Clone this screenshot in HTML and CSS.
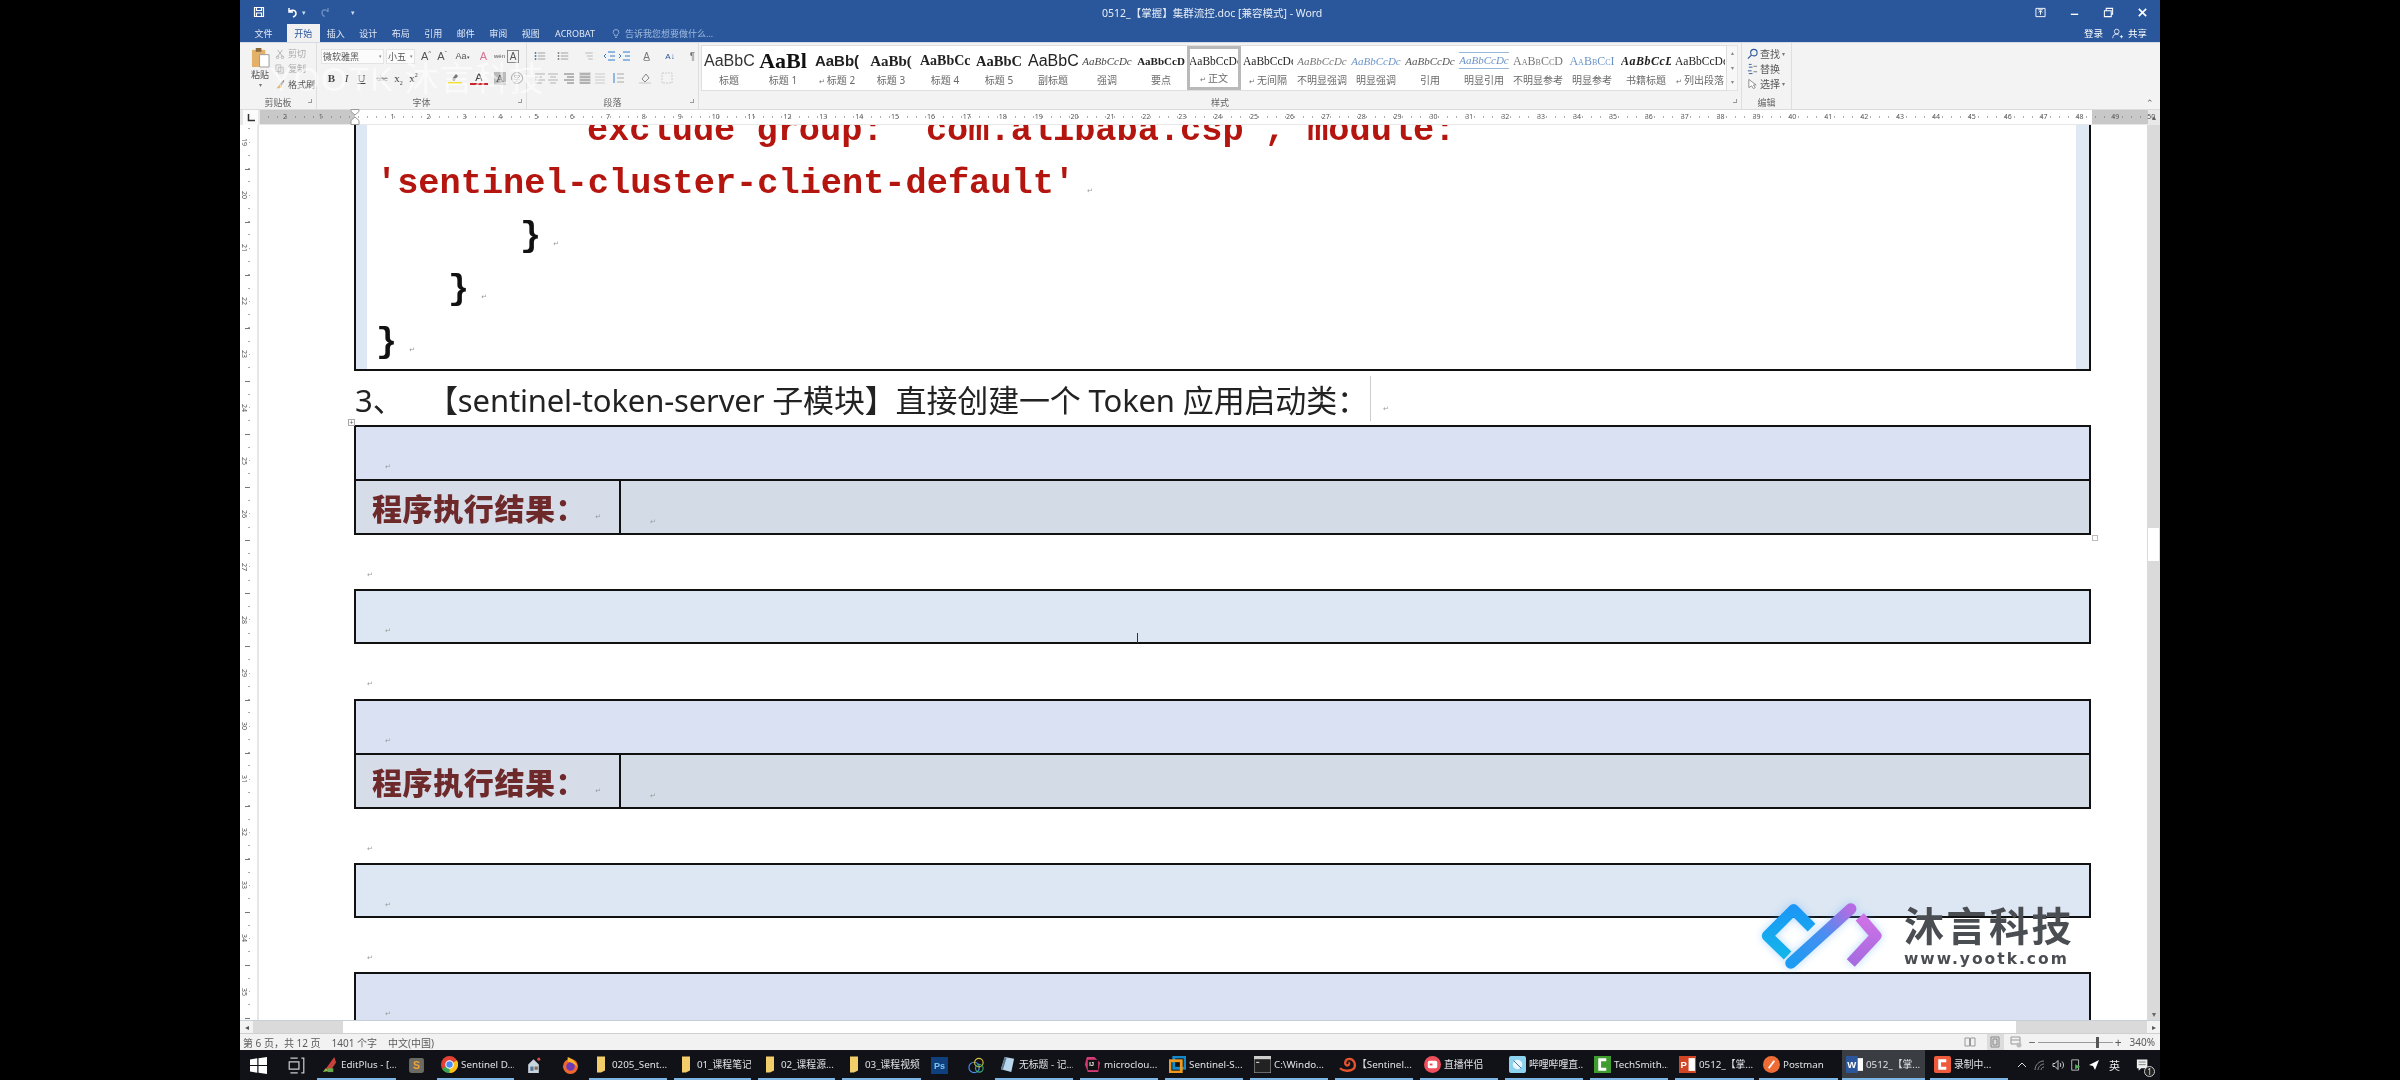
FILE: index.html
```html
<!DOCTYPE html>
<html lang="zh-CN">
<head>
<meta charset="utf-8">
<title>0512_【掌握】集群流控.doc [兼容模式] - Word</title>
<link rel="stylesheet" href="styles.css">
</head>
<body>
<div class="win">
  <header class="titlebar">
    <div class="qat">
      <svg class="qi save" viewBox="0 0 12 12"><path d="M1.500 1.500h9v9h-9zM3.500 1.500v3h5v-3M3.500 10.500v-3.500h5v3.500" fill="none" stroke="#fff" stroke-width="1.200"/></svg>
      <svg class="qi undo" viewBox="0 0 12 12"><path d="M3 2v4h4M3 6c2-3 7-2 7 1.500 0 2-1.500 3-3 3.500" fill="none" stroke="#fff" stroke-width="1.500"/></svg>
      <span class="caret">▾</span>
      <svg class="qi redo" viewBox="0 0 12 12"><path d="M9 2v4M9 6c-1-3-6-3-6 1 0 2 1.500 3 3 3.500" fill="none" stroke="#6d8fc2" stroke-width="1.300"/></svg>
      <span class="caret qend">▾</span>
    </div>
    <div class="doc-title">0512_【掌握】集群流控.doc [兼容模式] - Word</div>
    <div class="winctl">
      <span class="ctl"><svg viewBox="0 0 12 12"><path d="M1 1.500h10v9H1z" fill="none" stroke="#fff"/><path d="M6 8.500V4M4 6l2-2 2 2M3.500 3h5" fill="none" stroke="#fff"/></svg></span>
      <span class="ctl"><svg viewBox="0 0 12 12"><path d="M2 8h8" stroke="#fff" stroke-width="1.500"/></svg></span>
      <span class="ctl"><svg viewBox="0 0 12 12"><path d="M1.500 4h7.500v6.500H1.500zM3.500 4V1.500h7V8H9" fill="none" stroke="#fff" stroke-width="1.100"/></svg></span>
      <span class="ctl"><svg viewBox="0 0 12 12"><path d="M2 2l8 8M10 2l-8 8" stroke="#fff" stroke-width="1.800"/></svg></span>
    </div>
  </header>

  <nav class="tabs">
    <span class="tab file">文件</span>
    <span class="tab active">开始</span>
    <span class="tab">插入</span>
    <span class="tab">设计</span>
    <span class="tab">布局</span>
    <span class="tab">引用</span>
    <span class="tab">邮件</span>
    <span class="tab">审阅</span>
    <span class="tab">视图</span>
    <span class="tab acrobat">ACROBAT</span>
    <span class="tell">
      <svg viewBox="0 0 10 12"><path d="M3.500 9V7.500C2 6.500 1.500 5.500 1.500 4.500a3.500 3.500 0 0 1 7 0c0 1-.5 2-2 3V9zM4 11h2" fill="none" stroke="#a9c1e4"/></svg>
      告诉我您想要做什么...
    </span>
    <span class="account">
      <span>登录</span>
      <svg viewBox="0 0 14 14"><circle cx="6" cy="4.500" r="3" fill="none" stroke="#fff"/><path d="M1 13c0-4 2-5 5-5 1 0 2 .3 2.500 1M10 11h4M12 9v4" fill="none" stroke="#fff"/></svg>
      <span>共享</span>
    </span>
  </nav>

  <section class="ribbon">
    <div class="group clip">
      <div class="gbody clipbody">
        <div class="paste">
          <svg viewBox="0 0 20 22"><rect x="1" y="3" width="14" height="18" fill="#e3b268"/><rect x="5" y="1" width="6" height="4" fill="#8a6a3c"/><path d="M9 8h10v13H9z" fill="#fff" stroke="#999"/></svg>
          <span>粘贴</span>
          <span class="mini">▾</span>
        </div>
        <div class="cliplist">
          <span class="cl faint"><svg viewBox="0 0 12 12"><path d="M3 1l6 8M9 1l-6 8" stroke="#aaa"/><circle cx="3" cy="10" r="1.500" fill="none" stroke="#aaa"/><circle cx="9" cy="10" r="1.500" fill="none" stroke="#aaa"/></svg>剪切</span>
          <span class="cl faint"><svg viewBox="0 0 12 12"><path d="M1 1h6v8H1zM4 4h6v7H4z" fill="#eee" stroke="#bbb"/></svg>复制</span>
          <span class="cl"><svg viewBox="0 0 12 12"><path d="M2 11l4-5 3 3-3 2z" fill="#e5b25c"/><path d="M6 6l4-5 1 1-3 6z" fill="#666"/></svg>格式刷</span>
        </div>
      </div>
      <div class="glabel">剪贴板<i class="launch"></i></div>
    </div>

    <div class="group font">
      <div class="gbody rows">
        <div class="row f1">
          <span class="combo cname">微软雅黑<em>▾</em></span>
          <span class="combo csize">小五<em>▾</em></span>
          <b class="b grow">A<sup>^</sup></b><b class="b">A<sup>ˇ</sup></b><span class="b aa">Aa<em>▾</em></span><span class="b clr">A</span><span class="b wen">wén</span><span class="b abox">A</span>
        </div>
        <div class="row f2">
          <b class="t">B</b><i class="t ital">I</i><u class="t">U</u><s class="t abc">abc</s><span class="t">x<sub>2</sub></span><span class="t">x<sup>2</sup></span>
          <span class="hl"><svg viewBox="0 0 14 12"><path d="M4 7l4-5 2 2-4 5z" fill="#777"/><rect y="10" width="14" height="2" fill="#f4df2e"/></svg></span>
          <span class="t ca">A</span><span class="t sh">A</span><span class="t circ">字</span>
        </div>
      </div>
      <div class="glabel">字体<i class="launch"></i></div>
    </div>

    <div class="group para">
      <div class="gbody rows">
        <div class="row p1">
          <svg class="pi w23" viewBox="0 0 16 12"><path d="M5 2h10M5 6h10M5 10h10" stroke="#888"/><path d="M1 2h2M1 6h2M1 10h2" stroke="#2b579a" stroke-width="2"/></svg>
          <svg class="pi w26" viewBox="0 0 16 12"><path d="M5 2h10M5 6h10M5 10h10" stroke="#888"/><path d="M1 2h2M1 6h2M1 10h2" stroke="#666" stroke-width="2"/></svg>
          <svg class="pi w20" viewBox="0 0 16 12"><path d="M3 2h10M5 6h8M7 10h6" stroke="#aaa"/></svg>
          <svg class="pi w15 tint" viewBox="0 0 12 12"><path d="M5 2h7M5 10h7M7 6h5" stroke="#2b7cd3"/><path d="M3 4L1 6l2 2" stroke="#2b7cd3" fill="none"/></svg>
          <svg class="pi w23 tint" viewBox="0 0 12 12"><path d="M5 2h7M5 10h7M7 6h5" stroke="#2b7cd3"/><path d="M1 4l2 2-2 2" stroke="#2b7cd3" fill="none"/></svg>
          <span class="pt w24">A̲</span>
          <span class="pt w23 sort">A↓</span>
          <span class="pt">¶</span>
        </div>
        <div class="row p2">
          <svg class="pi w13 lite" viewBox="0 0 12 12"><path d="M1 2h10M1 5h7M1 8h10M1 11h7" stroke="#999"/></svg>
          <svg class="pi w16 lite" viewBox="0 0 12 12"><path d="M1 2h10M3 5h6M1 8h10M3 11h6" stroke="#999"/></svg>
          <svg class="pi w16" viewBox="0 0 12 12"><path d="M1 2h10M4 5h7M1 8h10M4 11h7" stroke="#777"/></svg>
          <svg class="pi w15 shade" viewBox="0 0 12 12"><path d="M1 2h10M1 5h10M1 8h10M1 11h10" stroke="#888"/></svg>
          <svg class="pi w18 lite" viewBox="0 0 12 12"><path d="M1 2h10M1 5h10M1 8h10M1 11h10" stroke="#bbb"/></svg>
          <svg class="pi w27" viewBox="0 0 12 12"><path d="M5 2h7M5 6h7M5 10h7" stroke="#aaa"/><path d="M2 1v10" stroke="#2b7cd3"/></svg>
          <svg class="pi w22" viewBox="0 0 12 12"><path d="M3 7l4-5 3 4-4 4z" fill="none" stroke="#888"/><rect y="10" width="12" height="2" fill="#ddd"/></svg>
          <svg class="pi" viewBox="0 0 12 12"><path d="M1 1h10v10H1z" fill="none" stroke="#ccc" stroke-dasharray="2 1"/></svg>
        </div>
      </div>
      <div class="glabel">段落<i class="launch"></i></div>
    </div>

    <div class="group styles">
      <div class="gbody gallerywrap">
        <div class="gallery">
          <div class="st"><span class="sm s-light">AaBbC</span><span class="lb">标题</span></div>
          <div class="st"><span class="sm s-h1">AaBl</span><span class="lb">标题 1</span></div>
          <div class="st"><span class="sm s-h2">AaBb(</span><span class="lb"><em>↵</em>标题 2</span></div>
          <div class="st"><span class="sm s-h3">AaBb(</span><span class="lb">标题 3</span></div>
          <div class="st"><span class="sm s-h4">AaBbCc</span><span class="lb">标题 4</span></div>
          <div class="st"><span class="sm s-h5">AaBbC</span><span class="lb">标题 5</span></div>
          <div class="st"><span class="sm s-sub">AaBbC</span><span class="lb">副标题</span></div>
          <div class="st"><span class="sm s-em">AaBbCcDc</span><span class="lb">强调</span></div>
          <div class="st"><span class="sm s-st">AaBbCcD</span><span class="lb">要点</span></div>
          <div class="st on"><span class="sm s-n">AaBbCcDc</span><span class="lb"><em>↵</em>正文</span></div>
          <div class="st"><span class="sm s-n">AaBbCcDc</span><span class="lb"><em>↵</em>无间隔</span></div>
          <div class="st"><span class="sm s-em g">AaBbCcDc</span><span class="lb">不明显强调</span></div>
          <div class="st"><span class="sm s-em bl">AaBbCcDc</span><span class="lb">明显强调</span></div>
          <div class="st"><span class="sm s-em dk">AaBbCcDc</span><span class="lb">引用</span></div>
          <div class="st"><span class="sm s-em bl ruled">AaBbCcDc</span><span class="lb">明显引用</span></div>
          <div class="st"><span class="sm s-caps g">AaBbCcD</span><span class="lb">不明显参考</span></div>
          <div class="st"><span class="sm s-caps bl">AaBbCcI</span><span class="lb">明显参考</span></div>
          <div class="st"><span class="sm s-book">AaBbCcD</span><span class="lb">书籍标题</span></div>
          <div class="st"><span class="sm s-n">AaBbCcDc</span><span class="lb"><em>↵</em>列出段落</span></div>
        </div>
        <div class="gscroll"><span>▴</span><span>▾</span><span>▾</span></div>
      </div>
      <div class="glabel">样式<i class="launch"></i></div>
    </div>

    <div class="group edit">
      <div class="gbody editlist">
        <span class="ed"><svg viewBox="0 0 12 12"><circle cx="7.500" cy="4.500" r="3.500" fill="none" stroke="#2b579a" stroke-width="1.200"/><path d="M5 7l-4 4" stroke="#2b579a" stroke-width="1.300"/></svg>查找<em>▾</em></span>
        <span class="ed"><svg viewBox="0 0 12 12"><path d="M2 1h3M2 4h4M1 8h4M2 11h4" stroke="#2b579a"/><path d="M7 3h4M7 9h4" stroke="#777"/></svg>替换</span>
        <span class="ed"><svg viewBox="0 0 12 12"><path d="M2 1v9l3-2 2 3 2-1-2-3h3z" fill="#fff" stroke="#888"/></svg>选择<em>▾</em></span>
      </div>
      <div class="glabel">编辑</div>
    </div>

    <div class="collapse">⌃</div>
    <div class="ghost">YOOTK 沐言科技</div>
  </section>

  <div class="hruler">
    <span class="tabstop"><svg viewBox="0 0 8 8"><path d="M1.500 0v6.500H8" fill="none" stroke="#333" stroke-width="1.500"/></svg></span>
    <div class="htrack">
      <svg class="indent" viewBox="0 0 10 16"><path d="M1 .5h8v2L5 6 1 2.500zM5 8l4 3.500v4H1v-4z" fill="#fff" stroke="#999"/></svg>
      <span>2</span><span>1</span><span></span><span>1</span><span>2</span><span>3</span><span>4</span><span>5</span><span>6</span><span>7</span><span>8</span><span>9</span><span>10</span><span>11</span><span>12</span><span>13</span><span>14</span><span>15</span><span>16</span><span>17</span><span>18</span><span>19</span><span>20</span><span>21</span><span>22</span><span>23</span><span>24</span><span>25</span><span>26</span><span>27</span><span>28</span><span>29</span><span>30</span><span>31</span><span>32</span><span>33</span><span>34</span><span>35</span><span>36</span><span>37</span><span>38</span><span>39</span><span>40</span><span>41</span><span>42</span><span>43</span><span>44</span><span>45</span><span>46</span><span>47</span><span>48</span><span>49</span><span>50</span>
    </div>
    <div class="upbtn">▴</div>
  </div>

  <main class="docarea">
    <div class="vruler">
      <div class="vtrack">
        <span>19</span><span>20</span><span>21</span><span>22</span><span>23</span><span>24</span><span>25</span><span>26</span><span>27</span><span>28</span><span>29</span><span>30</span><span>31</span><span>32</span><span>33</span><span>34</span><span>35</span>
      </div>
    </div>
    <div class="page">
      <div class="code">
        <p class="cl1 red">exclude group: 'com.alibaba.csp', module:</p>
        <p class="cline red">'sentinel-cluster-client-default'<i class="pm">↵</i></p>
        <p class="cline ind2">}<i class="pm">↵</i></p>
        <p class="cline ind1">}<i class="pm">↵</i></p>
        <p class="cline">}<i class="pm">↵</i></p>
      </div>
      <h2 class="head"><span class="num">3、</span><span class="htext">【sentinel-token-server 子模块】直接创建一个 Token 应用启动类：</span><span class="caretbox"><i class="pm">↵</i></span></h2>
      <div class="tbl lav first">
        <span class="move">+</span>
        <div class="rw"><i class="pm">↵</i></div>
        <div class="rw res">
          <div class="lab">程序执行结果：<i class="pm">↵</i></div>
          <div class="val"><i class="pm">↵</i></div>
        </div>
        <span class="resize"></span>
      </div>
      <div class="gap"><i class="pm">↵</i></div>
      <div class="tbl sky"><div class="rw rw-solo"><i class="pm">↵</i></div></div>
      <div class="gap gap2"><i class="pm">↵</i></div>
      <div class="tbl lav">
        <div class="rw"><i class="pm">↵</i></div>
        <div class="rw res">
          <div class="lab">程序执行结果：<i class="pm">↵</i></div>
          <div class="val"><i class="pm">↵</i></div>
        </div>
      </div>
      <div class="gap"><i class="pm">↵</i></div>
      <div class="tbl sky"><div class="rw rw-solo"><i class="pm">↵</i></div></div>
      <div class="gap"><i class="pm">↵</i></div>
      <div class="tbl lav"><div class="rw rw-solo"><i class="pm">↵</i></div></div>
      <span class="ibeam"></span>
    </div>
    <div class="vscroll"><span class="vthumb"></span><span class="va up">▴</span><span class="va down">▾</span></div>
  </main>

  <div class="hscroll">
    <span class="ha">◂</span><span class="hgray"></span><span class="hwhite"></span><span class="hgray2"></span><span class="ha">▸</span>
  </div>

  <footer class="status">
    <span>第 6 页，共 12 页</span><span>1401 个字</span><span>中文(中国)</span>
    <div class="viewctl">
      <svg class="vi" viewBox="0 0 12 12"><path d="M1 2h4.500v8H1zM6.500 2H11v8H6.500z" fill="none" stroke="#999"/></svg>
      <span class="vbox"><svg class="vi" viewBox="0 0 12 12"><path d="M2 1h8v10H2zM4 3h4v6H4z" fill="none" stroke="#888"/></svg></span>
      <svg class="vi" viewBox="0 0 12 12"><path d="M1 1h9v7H1zM1 4h9" fill="none" stroke="#999"/><circle cx="9" cy="9" r="2.500" fill="#bbb"/></svg>
      <span class="zm minus">−</span>
      <span class="slider"><i class="knob"></i></span>
      <span class="zm plus">+</span>
      <span class="pct">340%</span>
    </div>
  </footer>

  <div class="taskbar">
    <span class="tcell c36"><svg class="ti" viewBox="0 0 14 14"><path d="M0 2l6-1v5.500H0zM7 1l7-1v6.500H7zM0 7.500h6V13l-6-1zM7 7.500h7V14l-7-1z" fill="#fff"/></svg></span>
    <span class="tcell c41"><svg class="ti" viewBox="0 0 14 14"><path d="M1 4h8v6H1zM11 1h2v12h-2M2 1h6M2 13h6" fill="none" stroke="#ccc"/></svg></span>
    <span class="app w79"><svg class="ti" viewBox="0 0 16 18"><path d="M3 15L13 1l2 6-7 10z" fill="#c8423b"/><path d="M1 17l3-4 3 3z" fill="#8fc04d"/><rect x="6" y="13" width="6" height="4" fill="#6aa84f"/></svg>EditPlus - [...</span>
    <span class="tcell c41"><svg class="ti" viewBox="0 0 16 16"><rect x="1" y="1" width="14" height="14" rx="2" fill="#6b6b63"/><text x="8" y="11" class="sblm">S</text></svg></span>
    <span class="app w77n"><svg class="ti" viewBox="0 0 16 16"><circle cx="8" cy="8" r="8" fill="#e34133"/><path d="M8 8L1 12a8 8 0 0 0 7 4z" fill="#35a853"/><path d="M8 8v8a8 8 0 0 0 7-12z" fill="#fbc116"/><circle cx="8" cy="8" r="3.500" fill="#4a8bf5" stroke="#fff"/></svg>Sentinel D...</span>
    <span class="tcell c38"><svg class="ti" viewBox="0 0 16 16"><path d="M3 7l5-5 5 5v8H3z" fill="#c7d4dc"/><rect x="5" y="9" width="3" height="4" fill="#59729a"/><rect x="9" y="9" width="3" height="3" fill="#7d6a57"/><circle cx="13" cy="2" r="1.500" fill="#d24a3f"/></svg></span>
    <span class="tcell c37"><svg class="ti" viewBox="0 0 16 18"><circle cx="8" cy="10" r="8" fill="#f0662c"/><circle cx="8" cy="10" r="4.500" fill="#6d3bb8"/><path d="M5 0c5 2 9 5 10 10-3-3-7-5-10-5z" fill="#fbb72c"/></svg></span>
    <span class="app w78"><svg class="ti fold" viewBox="0 0 8 16"><path d="M0 0h8v14l-4 2H0z" fill="#f3cd6a"/></svg>0205_Sent...</span>
    <span class="app w77"><svg class="ti fold" viewBox="0 0 8 16"><path d="M0 0h8v14l-4 2H0z" fill="#f3cd6a"/></svg>01_课程笔记</span>
    <span class="app w77"><svg class="ti fold" viewBox="0 0 8 16"><path d="M0 0h8v14l-4 2H0z" fill="#f3cd6a"/></svg>02_课程源...</span>
    <span class="app w79x"><svg class="ti fold" viewBox="0 0 8 16"><path d="M0 0h8v14l-4 2H0z" fill="#f3cd6a"/></svg>03_课程视频</span>
    <span class="tcell c37"><svg class="ti" viewBox="0 0 16 16"><rect width="16" height="16" fill="#0f3f7c"/><text x="8" y="11.500" class="psh">Ps</text></svg></span>
    <span class="tcell c37"><svg class="ti" viewBox="0 0 18 18"><circle cx="6.500" cy="11" r="5.500" fill="none" stroke="#4a8df0" stroke-width="1.200"/><circle cx="11.500" cy="6" r="4.500" fill="none" stroke="#d7c33b" stroke-width="1.200"/><circle cx="12" cy="12" r="4" fill="none" stroke="#3ab06f" stroke-width="1.200"/></svg></span>
    <span class="app w78"><svg class="ti" viewBox="0 0 16 18"><path d="M5 1l10 2-3 14-11-3z" fill="#b8d6ee"/><path d="M1 14l4-13 2 1-4 13z" fill="#5f7a8f"/></svg>无标题 - 记...</span>
    <span class="app w78"><svg class="ti" viewBox="0 0 18 18"><path d="M3 1h8l6 6-2 10H4L1 9z" fill="#d63a78"/><rect x="4" y="4" width="11" height="11" fill="#111"/><text x="5.500" y="11" class="idea">IJ</text></svg>microclou...</span>
    <span class="app w78"><svg class="ti" viewBox="0 0 18 18"><rect x="5" y="1" width="12" height="12" fill="none" stroke="#1588c9" stroke-width="3"/><rect x="1" y="5" width="12" height="12" fill="none" stroke="#ef9a1f" stroke-width="3"/></svg>Sentinel-S...</span>
    <span class="app w78"><svg class="ti" viewBox="0 0 16 16"><rect width="16" height="16" fill="#222" stroke="#aaa"/><rect width="16" height="3" fill="#ccc"/><path d="M2 6h3" stroke="#ddd"/></svg>C:\Windo...</span>
    <span class="app w78 pad"><svg class="ti" viewBox="0 0 18 16"><path d="M1 12c3 3 11 4 15 0 2-4 0-10-5-10-5 0-6 7-2 7 2 0 2-3 1-3" fill="none" stroke="#e4532c" stroke-width="2.500"/></svg>【Sentinel...</span>
    <span class="app w78"><svg class="ti" viewBox="0 0 18 18"><circle cx="9" cy="9" r="9" fill="#ef4f5d"/><rect x="4" y="5" width="10" height="8" rx="2" fill="#fff"/><rect x="6" y="8" width="3" height="2" fill="#ef4f5d"/></svg>直播伴侣</span>
    <span class="app w78"><svg class="ti" viewBox="0 0 18 18"><rect width="18" height="18" rx="2" fill="#8dd3ef"/><circle cx="9" cy="9" r="5" fill="#e9f6fb"/><path d="M5 5l8 8" stroke="#3f6fa5"/></svg>哔哩哔哩直...</span>
    <span class="app w78"><svg class="ti" viewBox="0 0 18 18"><rect width="18" height="18" fill="#3f9c2f"/><path d="M13 4H6v10h7" fill="none" stroke="#fff" stroke-width="3"/></svg>TechSmith...</span>
    <span class="app w79p"><svg class="ti" viewBox="0 0 16 16"><rect width="16" height="16" fill="#d14424"/><rect x="9" y="2" width="6" height="12" fill="#fff"/><text x="4.500" y="11.500" class="pp">P</text></svg>0512_【掌...</span>
    <span class="app w79b"><svg class="ti" viewBox="0 0 18 18"><circle cx="9" cy="9" r="9" fill="#ef6c35"/><path d="M6 13l6-8" stroke="#fff" stroke-width="2"/></svg>Postman</span>
    <span class="app active w83"><svg class="ti" viewBox="0 0 16 16"><rect width="11" height="16" fill="#2b579a"/><rect x="11" y="2" width="5" height="12" fill="#fff"/><text x="5.500" y="11.500" class="pp">W</text></svg>0512_【掌...</span>
    <span class="app w78"><svg class="ti" viewBox="0 0 18 18"><rect width="18" height="18" rx="2" fill="#ee5b3c"/><path d="M13 5H6v8h7" fill="none" stroke="#fff" stroke-width="3"/></svg>录制中...</span>
    <div class="tray">
      <svg class="ty" viewBox="0 0 12 12"><path d="M2 8l4-4 4 4" fill="none" stroke="#ddd"/></svg>
      <svg class="ty" viewBox="0 0 12 12"><path d="M1 11c0-5 4-9 9-9M4 11c0-3 3-6 6-6M7 11c0-1 1-3 3-3" fill="none" stroke="#888"/></svg>
      <svg class="ty" viewBox="0 0 12 12"><path d="M1 4.500h2l3-3v9l-3-3H1z" fill="none" stroke="#ccc"/><path d="M8 4c1 1 1 3 0 4M10 2.500c2 2 2 5 0 7" fill="none" stroke="#ccc"/></svg>
      <svg class="ty" viewBox="0 0 12 14"><path d="M1 1h8v12H1z" fill="none" stroke="#ccc"/><path d="M5 6l6 3-6 3z" fill="#4caf50"/></svg>
      <svg class="ty" viewBox="0 0 12 12"><path d="M1 6l10-5-4 10-2-4z" fill="#fff"/></svg>
      <span class="ime">英</span>
      <span class="notif"><svg viewBox="0 0 16 14"><path d="M1 0h12v10H6l-3 3v-3H1z" fill="#eee"/><path d="M3 3h8M3 6h8" stroke="#777"/></svg><b>1</b></span>
    </div>
  </div>

  <div class="logo">
    <svg class="logomark" viewBox="115 58 385 215">
      <defs>
        <linearGradient id="lg1" x1="0" y1="0" x2="0" y2="1"><stop offset="0" stop-color="#1b98f5"/><stop offset="1" stop-color="#12b5ea"/></linearGradient>
        <linearGradient id="lg2" x1="0" y1="1" x2="1" y2="0"><stop offset="0" stop-color="#1b9bf2"/><stop offset=".55" stop-color="#4a8ef0"/><stop offset="1" stop-color="#b56ce2"/></linearGradient>
        <linearGradient id="lg3" x1="0" y1="0" x2="0" y2="1"><stop offset="0" stop-color="#cf72e6"/><stop offset="1" stop-color="#a66be0"/></linearGradient>
      </defs>
      <path d="M276 140L222 86 143 165 204 224" fill="none" stroke="url(#lg1)" stroke-width="33" stroke-linejoin="round"/>
      <path d="M214 247L394 84" fill="none" stroke="url(#lg2)" stroke-width="34" stroke-linecap="round"/>
      <path d="M421 108L470 165 394 247" fill="none" stroke="url(#lg3)" stroke-width="33" stroke-linejoin="round"/>
    </svg>
    <div class="logotext">
      <span class="lcn">沐言科技</span>
      <span class="len">www.yootk.com</span>
    </div>
  </div>
</div>
</body>
</html>
```
FILE: styles.css
```css
* { box-sizing: border-box; }
html, body { margin: 0; height: 100%; background: #000; overflow: hidden; }
body { display: flex; justify-content: center; font-family: "Noto Sans", "Noto Sans CJK SC", sans-serif; }
p, h2 { margin: 0; }
em { font-style: normal; }

.win { position: relative; width: 1920px; height: 1080px; display: flex; flex-direction: column; background: #f1f1f1; color: #444; overflow: hidden; filter: blur(.35px); }

/* title bar */
.titlebar { height: 24px; flex: none; background: #2a579c; display: grid; grid-template-columns: 862px 300px 1fr; align-items: center; color: #e6edf7; }
.qat { display: flex; align-items: center; padding-left: 13px; }
.qi { width: 12px; height: 12px; }
.undo { margin-left: 21px; }
.caret { font-size: 7px; color: #cfdcef; margin-left: 4px; }
.redo { margin-left: 13px; }
.qend { margin-left: 20px; }
.doc-title { font-size: 10.500px; white-space: nowrap; }
.winctl { display: flex; justify-content: flex-end; padding-right: 1px; }
.ctl { width: 34px; display: flex; justify-content: center; }
.ctl svg { width: 11px; height: 11px; }

/* tabs */
.tabs { height: 18px; flex: none; background: #2a579c; display: flex; align-items: stretch; font-size: 9px; color: #e2e9f5; }
.tab { width: 32.500px; display: flex; align-items: center; justify-content: center; }
.tab.file { width: 47px; }
.tab.active { background: #f1f1f1; color: #2a579c; }
.tab.acrobat { width: 56px; }
.tell { display: flex; align-items: center; gap: 5px; margin-left: 9px; color: #9fb9de; }
.tell svg { width: 8px; height: 11px; }
.account { margin-left: auto; margin-right: 13px; display: flex; align-items: center; color: #fff; font-size: 9.500px; }
.account svg { width: 11px; height: 11px; margin: 0 5px 0 9px; }

/* ribbon */
.ribbon { position: relative; height: 68px; flex: none; display: flex; background: #f3f3f3; border-bottom: 1px solid #dcdcdc; border-top: 1px solid #d4dbe6; font-size: 9px; }
.group { display: flex; flex-direction: column; border-right: 1px solid #dedede; }
.gbody { flex: 1; min-height: 0; }
.glabel { position: relative; height: 18px; padding-top: 5px; flex: none; display: flex; align-items: center; justify-content: center; color: #666; font-size: 9px; }
.launch { position: absolute; right: 4px; top: 8px; width: 4px; height: 4px; border-right: 1px solid #999; border-bottom: 1px solid #999; }
.clip { width: 77px; }
.font { width: 210px; }
.para { width: 172px; }
.styles { width: 1043px; }
.edit { width: 50px; }

.clipbody { display: flex; padding: 4px 0 0 8px; }
.paste { width: 24px; display: flex; flex-direction: column; align-items: center; color: #555; }
.paste svg { width: 19px; height: 21px; margin-bottom: 1px; }
.mini { font-size: 6px; line-height: 8px; color: #777; }
.paste span:nth-child(2) { line-height: 12px; }
.cliplist { display: flex; flex-direction: column; gap: 2px; margin-left: 3px; }
.cl { display: flex; align-items: center; gap: 3px; height: 14px; color: #555; white-space: nowrap; }
.cl.faint { color: #aaa; }
.cl svg { width: 10px; height: 10px; }

.rows { display: flex; flex-direction: column; padding: 5px 0 0 4px; gap: 6px; }
.row { display: flex; align-items: center; height: 16px; color: #555; }
.combo { height: 15px; display: flex; align-items: center; justify-content: space-between; background: #fbfbfb; border: 1px solid #e4e4e4; padding: 0 1px; font-size: 9px; }
.combo em { font-size: 5px; color: #888; }
.cname { width: 63px; margin-right: 2px; }
.csize { width: 29px; margin-right: 3px; }
.b { width: 16px; text-align: center; font-size: 11px; font-weight: 500; font-family: "Liberation Sans", sans-serif; }
.b sup { font-size: 6px; line-height: 0; }
.b.aa { width: 25px; font-size: 9px; }
.b.aa em { font-size: 5px; }
.b.clr { color: #d9718e; width: 17px; }
.b.wen { font-size: 6px; width: 15px; }
.b.abox { width: 12px; height: 13px; border: 1px solid #888; font-size: 10px; line-height: 11px; }
.f2 { padding-left: 3px; }
.t { width: 15px; text-align: center; font-family: "Liberation Serif", serif; font-size: 11px; color: #444; text-decoration-thickness: 1px; }
.t.ital { font-family: "Liberation Serif", serif; }
.t.abc { font-size: 8px; width: 18px; margin-left: 4px; color: #999; }
.t sub, .t sup { font-size: 6px; line-height: 0; }
.hl { width: 14px; margin-left: 27px; display: flex; }
.hl svg { width: 14px; height: 12px; }
.t.ca { margin-left: 8px; border-bottom: 2px solid #c9252c; line-height: 11px; font-family: "Liberation Sans", sans-serif; width: 18px; }
.t.sh { background: #bbb; margin-left: 6px; width: 12px; line-height: 13px; }
.t.circ { font-size: 7px; border: 1px solid #aaa; border-radius: 50%; width: 12px; height: 12px; line-height: 10px; margin-left: 5px; font-family: "Noto Sans CJK SC", sans-serif; color: #999; }
.pi { width: 12px; height: 12px; flex: none; }
.pt { font-size: 10px; color: #777; width: 12px; text-align: center; font-family: "Liberation Sans", sans-serif; }
.p1, .p2 { gap: 0; padding-left: 3px; }
.w13 { margin-right: 1px; }
.w15 { margin-right: 3px; }
.w16 { margin-right: 4px; }
.w18 { margin-right: 6px; }
.w20 { margin-right: 8px; }
.w22 { margin-right: 10px; }
.w23 { margin-right: 11px; }
.w24 { margin-right: 12px; }
.w26 { margin-right: 14px; }
.w27 { margin-right: 15px; }
.sort { color: #2b579a; font-size: 8px; }
.lite { opacity: .7; }
.shade { background: #ddd; }

.gallerywrap { display: flex; padding: 2px 0 0 2px; }
.gallery { width: 1026px; height: 46px; display: flex; background: #fff; border: 1px solid #dedede; }
.st { width: 54px; flex: none; display: flex; flex-direction: column; align-items: center; overflow: hidden; }
.st.on { border: 3px solid #b9b9b9; margin-left: -1px; }
.st.on .sm { margin-top: -3px; }
.sm { height: 27px; width: 50px; display: block; overflow: hidden; white-space: nowrap; text-align: center; line-height: 30px; font-family: "Liberation Serif", serif; font-size: 11.500px; color: #222; }
.lb { font-size: 10px; line-height: 14px; color: #6a6a6a; white-space: nowrap; }
.lb em { font-size: 7px; margin-right: 2px; }
.s-light { font-family: "Liberation Sans", sans-serif; font-size: 16px; font-weight: 300; color: #333; }
.s-h1 { font-size: 22px; font-weight: 700; color: #111; }
.s-h2 { font-family: "Liberation Sans", sans-serif; font-size: 15px; font-weight: 700; }
.s-h3 { font-size: 15px; font-weight: 700; }
.s-h4 { font-size: 14px; font-weight: 700; }
.s-h5 { font-size: 14.500px; font-weight: 700; }
.s-sub { font-family: "Liberation Sans", sans-serif; font-size: 16px; }
.s-em { font-style: italic; font-size: 11px; color: #444; }
.s-st { font-weight: 700; font-size: 11px; }
.s-n { font-size: 11.500px; }
.s-caps { font-variant: small-caps; font-size: 12px; }
.s-book { font-style: italic; font-weight: 700; font-size: 12px; letter-spacing: .5px; }
.g { color: #777; }
.bl { color: #6a93c8; }
.dk { color: #555; }
.ruled { line-height: 14px; height: 17px; margin-top: 6px; border-top: 1px solid #9ab8dc; border-bottom: 1px solid #9ab8dc; margin-bottom: 4px; }
.gscroll { width: 11px; height: 46px; display: flex; flex-direction: column; background: #f7f7f7; border: 1px solid #e4e4e4; border-left: 0; }
.gscroll span { flex: 1; font-size: 6px; line-height: 14px; text-align: center; color: #888; }

.editlist { display: flex; flex-direction: column; padding: 3px 0 0 5px; }
.ed { display: flex; align-items: center; gap: 2px; height: 16px; font-size: 10px; color: #555; white-space: nowrap; }
.ed svg { width: 11px; height: 12px; }
.ed em { font-size: 6px; color: #777; }
.collapse { margin-left: auto; margin-right: 6px; align-self: flex-end; font-size: 9px; line-height: 12px; color: #666; }
.ghost { position: absolute; left: 30px; top: 17px; font-size: 34px; line-height: 38px; white-space: nowrap; font-family: "Liberation Sans", "Noto Sans CJK SC", sans-serif; color: rgba(255, 255, 255, .55); letter-spacing: 1px; pointer-events: none; }

/* rulers */
.hruler { height: 15px; flex: none; display: flex; background: #e8e8e8; }
.tabstop { width: 15px; margin: 0 2px 0 3px; background: #fbfbfb; display: flex; align-items: center; justify-content: center; }
.tabstop svg { width: 8px; height: 8px; }
.htrack { position: relative; width: 1888px; display: flex; padding-left: 7px; height: 14px; background: repeating-linear-gradient(to right, transparent 0 8px, rgba(110,110,110,.55) 8px 9px) 0 6px / 100% 2px no-repeat, linear-gradient(to right, #c8c8c8 95px, #fff 95px, #fff 1832px, #c8c8c8 1832px); }
.htrack span { width: 35.900px; flex: none; text-align: center; font-size: 7px; line-height: 14px; color: #555; }
.indent { position: absolute; left: 90px; top: -1px; width: 10px; height: 16px; }
.upbtn { flex: 1; text-align: center; font-size: 8px; line-height: 13px; color: #666; }

.docarea { position: relative; flex: 1; min-height: 0; display: flex; background: #fff; overflow: hidden; }
.vruler { width: 19px; flex: none; background: #fff; border-right: 2px solid #e6e6e6; overflow: hidden; }
.vtrack { margin-top: -9.500px; background: repeating-linear-gradient(to bottom, transparent 0 12.300px, rgba(110,110,110,.6) 12.300px 13.275px) 8px 0 / 2px 100% no-repeat; }
.vtrack span { position: relative; display: flex; align-items: center; justify-content: center; height: 53.100px; writing-mode: vertical-rl; font-size: 7px; color: #555; background: #fff; background-clip: content-box; padding: 21px 0; }
.vtrack span::after { content: ""; position: absolute; left: 5px; bottom: -1px; width: 5px; height: 1px; background: #777; }
.page { position: relative; flex: 1; min-width: 0; padding-left: 95px; overflow: hidden; }
.vscroll { position: relative; width: 13px; flex: none; background: #dadada; }
.vthumb { position: absolute; left: 1px; top: 403px; width: 11px; height: 33px; background: #fff; }
.va { position: absolute; left: 0; width: 13px; text-align: center; font-size: 8px; color: #666; line-height: 12px; }
.va.down { bottom: 0; }
.va.up { display: none; }

/* document */
.code { width: 1737px; height: 246px; overflow: hidden; border: 2px solid #111; border-top: 0; background: linear-gradient(to right, #dde8f4 11px, #fff 11px, #fff calc(100% - 13px), #dee9f4 calc(100% - 13px)); padding-left: 20px; font-family: "Liberation Mono", monospace; font-weight: 700; font-size: 35.300px; line-height: 53px; color: #111; }
.code p { white-space: nowrap; }
.cl1 { margin-top: -20px; padding-left: 211px; }
.red { color: #b4160f; }
.ind2 { padding-left: 144px; }
.ind1 { padding-left: 72px; }
.pm { font-style: normal; font-weight: 400; font-family: "DejaVu Sans", sans-serif; font-size: 7px; color: #999; margin-left: 12px; line-height: 1; vertical-align: baseline; }

.head { height: 54px; display: flex; align-items: center; font-weight: 400; font-size: 31px; color: #222; font-family: "Noto Sans", "Noto Sans CJK SC", sans-serif; white-space: nowrap; }
.num { width: 73px; padding-left: 1px; }
.htext { letter-spacing: -.15px; }
.caretbox { align-self: stretch; margin: 5px 0 4px 2px; border-left: 1px solid #ccc; display: flex; align-items: flex-end; }
.caretbox .pm { margin: 0 0 8px 12px; }

.tbl { position: relative; width: 1737px; border: 2px solid #111; flex: none; }
.tbl .rw { height: 52px; padding: 30px 0 0 29px; line-height: 12px; }
.tbl .rw.rw-solo { height: 51px; }
.tbl .rw .pm { margin: 0; }
.lav { background: #d9e1f2; }
.sky { background: #dde7f3; }
.tbl .rw.res { display: flex; padding: 0; background: #d3dbe6; height: 54px; border-top: 2px solid #111; }
.lab { width: 265px; flex: none; display: flex; align-items: center; padding-left: 16px; border-right: 2px solid #111; background: #d6dde9; font-family: "Noto Sans CJK SC", sans-serif; font-weight: 900; font-size: 30px; letter-spacing: .6px; color: #6e2a2a; white-space: nowrap; line-height: 52px; }
.tbl .lab .pm { align-self: flex-end; margin: 0 0 12px 9px; }
.val { flex: 1; padding: 31px 0 0 29px; line-height: 12px; }
.val .pm { margin: 0; }
.gap { height: 54px; padding: 30px 0 0 13px; line-height: 12px; }
.gap .pm { margin: 0; }
.gap2 { height: 55px; }
.move { position: absolute; left: -8px; top: -8px; width: 7px; height: 7px; border: 1px solid #aaa; background: #fff; font-size: 7px; line-height: 5px; text-align: center; color: #555; }
.resize { position: absolute; right: -9px; bottom: -8px; width: 6px; height: 6px; border: 1px solid #bbb; background: #fff; }
.ibeam { position: absolute; left: 878px; top: 508px; width: 1px; height: 10px; background: #333; }

/* bottom bars */
.hscroll { height: 14px; flex: none; display: flex; align-items: stretch; background: #fff; border-bottom: 1px solid #cfcfcf; border-top: 1px solid #c9cfd8; }
.ha { width: 13px; font-size: 8px; line-height: 12px; text-align: center; color: #555; background: #f3f3f3; }
.hgray { width: 90px; background: #dadada; }
.hwhite { flex: 1; background: #fff; }
.hgray2 { width: 131px; background: #dadada; }
.status { height: 16px; flex: none; display: flex; align-items: center; gap: 11px; padding-left: 3px; background: #f2f2f2; font-size: 10px; color: #5a5a5a; white-space: nowrap; }
.viewctl { margin-left: auto; display: flex; align-items: center; padding-right: 5px; }
.vi { width: 12px; height: 12px; }
.viewctl > .vi:first-child { margin-right: 11px; }
.vbox { width: 17px; height: 16px; display: flex; align-items: center; justify-content: center; background: #dcdcdc; margin-right: 6px; }
.zm { font-size: 12px; }
.zm.minus { margin-left: 7px; }
.zm.plus { margin-left: 2px; }
.slider { position: relative; width: 75px; height: 1px; margin-left: 2px; background: #999; }
.knob { position: absolute; left: 58px; top: -5px; width: 3px; height: 11px; background: #555; }
.pct { margin-left: 8px; font-size: 10px; }

/* taskbar */
.taskbar { height: 30px; flex: none; display: flex; align-items: stretch; background: #101218; color: #dfe2e6; font-size: 9.800px; white-space: nowrap; }
.tcell { display: flex; align-items: center; justify-content: center; }
.c36 { width: 36px; }
.c37 { width: 37px; }
.c38 { width: 38px; }
.c41 { width: 41px; }
.ti { width: 17px; height: 17px; flex: none; }
.ti.fold { width: 8px; height: 17px; margin: 0 4px 0 4px; }
.app { display: flex; align-items: center; gap: 3px; padding-left: 4px; border-bottom: 2px solid #7db6e4; overflow: hidden; flex: none; }
.w79 { width: 79px; }
.w77n { width: 77px; }
.w77 { width: 77px; margin-right: 7px; }
.w78 { width: 78px; margin-right: 7px; }
.w79x { width: 79px; }
.w79p { width: 79px; margin-right: 5px; }
.w79b { width: 79px; margin-right: 4px; }
.w83 { width: 83px; margin-right: 5px; }
.pad { gap: 1px; }
.app.active { background: #3a3d42; }
.sblm { font: 700 10px "Liberation Sans", sans-serif; fill: #f0a33a; text-anchor: middle; }
.psh { font: 700 8.500px "Liberation Sans", sans-serif; fill: #7cc4f4; text-anchor: middle; }
.idea { font: 700 6px "Liberation Sans", sans-serif; fill: #fff; }
.pp { font: 700 9px "Liberation Sans", sans-serif; fill: #fff; text-anchor: middle; }
.tray { flex: 1; display: flex; align-items: center; padding-left: 1px; gap: 6px; }
.ty { width: 12px; height: 12px; }
.ime { font-size: 11px; margin-left: 3px; color: #eee; }
.notif { position: relative; margin-left: 10px; }
.notif svg { width: 14px; height: 13px; display: block; }
.notif b { position: absolute; right: -5px; bottom: -5px; width: 11px; height: 11px; border-radius: 50%; border: 1px solid #ccc; background: #222; font-size: 8px; line-height: 9px; text-align: center; font-weight: 400; }

/* watermark logo */
.logo { position: absolute; left: 1518px; top: 900px; display: flex; align-items: flex-start; gap: 18px; }
.logomark { width: 128px; height: 72px; filter: drop-shadow(0 0 4px rgba(90, 170, 250, .45)); }
.logotext { display: flex; flex-direction: column; width: 170px; }
.lcn { font-family: "Noto Sans CJK SC", sans-serif; font-weight: 700; font-size: 40px; line-height: 48px; letter-spacing: 2.500px; color: #4a4e53; white-space: nowrap; }
.len { font-family: "DejaVu Sans", sans-serif; font-weight: 700; font-size: 15.500px; line-height: 20px; letter-spacing: 2px; color: #4a4e53; white-space: nowrap; margin-top: 1px; }
```
